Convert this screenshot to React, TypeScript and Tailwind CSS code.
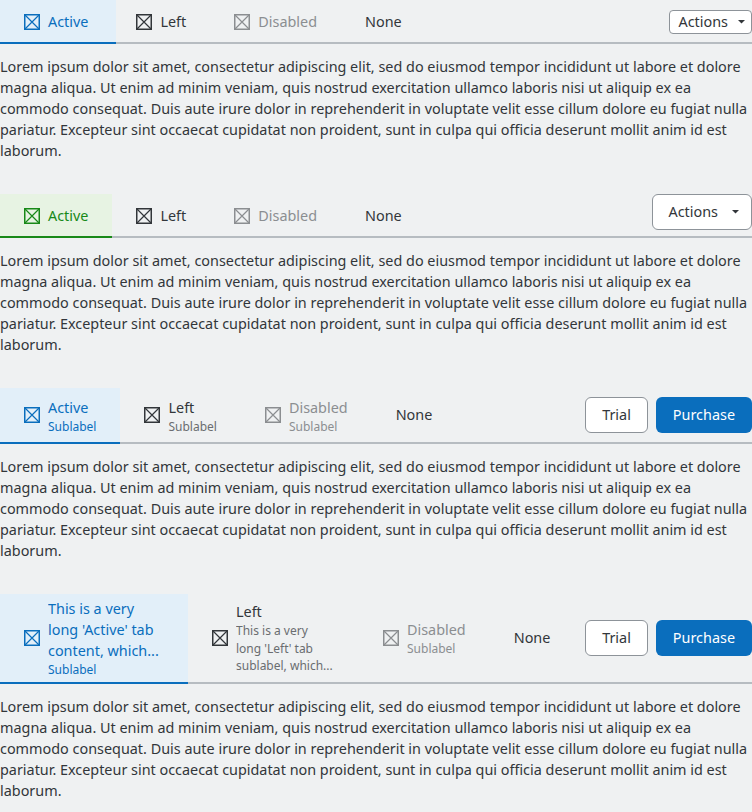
import React from "react";

const LOREM =
  "Lorem ipsum dolor sit amet, consectetur adipiscing elit, sed do eiusmod tempor incididunt ut labore et dolore magna aliqua. Ut enim ad minim veniam, quis nostrud exercitation ullamco laboris nisi ut aliquip ex ea commodo consequat. Duis aute irure dolor in reprehenderit in voluptate velit esse cillum dolore eu fugiat nulla pariatur. Excepteur sint occaecat cupidatat non proident, sunt in culpa qui officia deserunt mollit anim id est laborum.";

// box with a cross, used as the placeholder tab icon
const BoxIcon = () => (
  <svg width="16" height="16" viewBox="0 0 16 16" className="shrink-0" fill="none" stroke="currentColor">
    <rect x="0.75" y="0.75" width="14.5" height="14.5" strokeWidth="1.5" />
    <path d="M1 1 L15 15 M15 1 L1 15" strokeWidth="1.2" />
  </svg>
);

const Caret = ({ size = 8 }: { size?: number }) => (
  <svg width={size} height={size / 2} viewBox="0 0 8 4" fill="currentColor">
    <path d="M0 0 L8 0 L4 4 Z" />
  </svg>
);

const Lorem = () => <p className="mt-3 text-[14.4px] leading-[21px] text-[#32363a]">{LOREM}</p>;

const TrialPurchase = () => (
  <div className="ml-auto flex items-center gap-2">
    <button className="h-9 rounded-md border border-[#8d9399] bg-white px-4 text-[14.4px] text-[#32363a]">Trial</button>
    <button className="h-9 rounded-md bg-[#0a6ebd] px-[17px] text-[14.4px] text-white">Purchase</button>
  </div>
);

export default function App() {
  return (
    <div className="min-h-screen bg-[#eff1f2] font-['Noto_Sans',sans-serif] text-[#32363a]">
      <div className="flex flex-col gap-[33px]">
        {/* Section 1 - compact actions */}
        <section>
          <div className="flex items-center border-b-2 border-[#b6bcc1]">
            <div className="flex text-[14.4px]">
              <div className="-mb-0.5 flex h-[44px] items-center gap-2 border-b-2 border-[#0a6ebd] bg-[#e2eff9] pl-6 pr-7 pt-0.5 text-[#0a6ebd]">
                <BoxIcon />
                <span>Active</span>
              </div>
              <div className="-mb-0.5 flex h-[44px] items-center gap-2 border-b-2 border-transparent pl-5 pr-6 pt-0.5">
                <BoxIcon />
                <span>Left</span>
              </div>
              <div className="-mb-0.5 flex h-[44px] items-center gap-2 border-b-2 border-transparent px-6 pt-0.5 text-[#8b8e91]">
                <BoxIcon />
                <span>Disabled</span>
              </div>
              <div className="-mb-0.5 flex h-[44px] items-center border-b-2 border-transparent px-6 pt-0.5">
                <span>None</span>
              </div>
            </div>
            <button className="ml-auto mt-0.5 flex h-6 items-center gap-2.5 rounded border border-[#8d9399] bg-white pl-2 pr-1.5 text-[14.4px] text-[#32363a]">
              <span>Actions</span>
              <Caret size={7} />
            </button>
          </div>
          <Lorem />
        </section>

        {/* Section 2 - green active */}
        <section>
          <div className="flex border-b-2 border-[#b6bcc1]">
            <div className="flex text-[14.4px]">
              <div className="-mb-0.5 flex h-[44px] items-center gap-2 border-b-2 border-[#188918] bg-[#e7f3e3] px-6 pt-0.5 text-[#188918]">
                <BoxIcon />
                <span>Active</span>
              </div>
              <div className="-mb-0.5 flex h-[44px] items-center gap-2 border-b-2 border-transparent px-6 pt-0.5">
                <BoxIcon />
                <span>Left</span>
              </div>
              <div className="-mb-0.5 flex h-[44px] items-center gap-2 border-b-2 border-transparent px-6 pt-0.5 text-[#8b8e91]">
                <BoxIcon />
                <span>Disabled</span>
              </div>
              <div className="-mb-0.5 flex h-[44px] items-center border-b-2 border-transparent px-6 pt-0.5">
                <span>None</span>
              </div>
            </div>
            <button className="ml-auto flex h-9 items-center gap-3.5 self-start rounded-md border border-[#8d9399] bg-white pl-[15px] pr-3 text-[14.4px] text-[#32363a]">
              <span>Actions</span>
              <Caret size={7} />
            </button>
          </div>
          <Lorem />
        </section>

        {/* Section 3 - sublabels */}
        <section>
          <div className="flex items-center border-b-2 border-[#b6bcc1]">
            <div className="flex text-[14.4px]">
              <div className="-mb-0.5 flex min-h-[56px] items-center gap-2 border-b-2 border-[#0a6ebd] bg-[#e2eff9] px-6 text-[#0a6ebd]">
                <BoxIcon />
                <div className="flex flex-col pt-0.5">
                  <span className="leading-[21px]">Active</span>
                  <span className="text-[12px] leading-[17px]">Sublabel</span>
                </div>
              </div>
              <div className="-mb-0.5 flex min-h-[56px] items-center gap-2 border-b-2 border-transparent px-6">
                <BoxIcon />
                <div className="flex flex-col pt-0.5">
                  <span className="leading-[21px]">Left</span>
                  <span className="text-[12px] leading-[17px] text-[#6a6d70]">Sublabel</span>
                </div>
              </div>
              <div className="-mb-0.5 flex min-h-[56px] items-center gap-2 border-b-2 border-transparent px-6 text-[#8b8e91]">
                <BoxIcon />
                <div className="flex flex-col pt-0.5">
                  <span className="leading-[21px]">Disabled</span>
                  <span className="text-[12px] leading-[17px]">Sublabel</span>
                </div>
              </div>
              <div className="-mb-0.5 flex min-h-[56px] items-center border-b-2 border-transparent px-6">
                <span>None</span>
              </div>
            </div>
            <TrialPurchase />
          </div>
          <Lorem />
        </section>

        {/* Section 4 - long texts */}
        <section>
          <div className="flex items-center border-b-2 border-[#b6bcc1]">
            <div className="flex text-[14.4px]">
              <div className="-mb-0.5 flex min-h-[56px] items-center gap-2 border-b-2 border-[#0a6ebd] bg-[#e2eff9] px-6 py-1 text-[#0a6ebd]">
                <BoxIcon />
                <div className="flex w-[116px] flex-col">
                  <span className="line-clamp-3 leading-[21px]">This is a very long 'Active' tab content, which...</span>
                  <span className="text-[12px] leading-[17px]">Sublabel</span>
                </div>
              </div>
              <div className="-mb-0.5 flex min-h-[56px] items-center gap-2 border-b-2 border-transparent px-6 py-1">
                <BoxIcon />
                <div className="flex w-[99px] flex-col">
                  <span className="leading-[21px]">Left</span>
                  <span className="line-clamp-3 text-[12px] leading-[17.5px] text-[#6a6d70]">This is a very long 'Left' tab sublabel, which...</span>
                </div>
              </div>
              <div className="-mb-0.5 flex min-h-[56px] items-center gap-2 border-b-2 border-transparent px-6 py-1 text-[#8b8e91]">
                <BoxIcon />
                <div className="flex flex-col">
                  <span className="leading-[21px]">Disabled</span>
                  <span className="text-[12px] leading-[17px]">Sublabel</span>
                </div>
              </div>
              <div className="-mb-0.5 flex min-h-[56px] items-center border-b-2 border-transparent px-6 py-1">
                <span>None</span>
              </div>
            </div>
            <TrialPurchase />
          </div>
          <Lorem />
        </section>
      </div>
    </div>
  );
}
